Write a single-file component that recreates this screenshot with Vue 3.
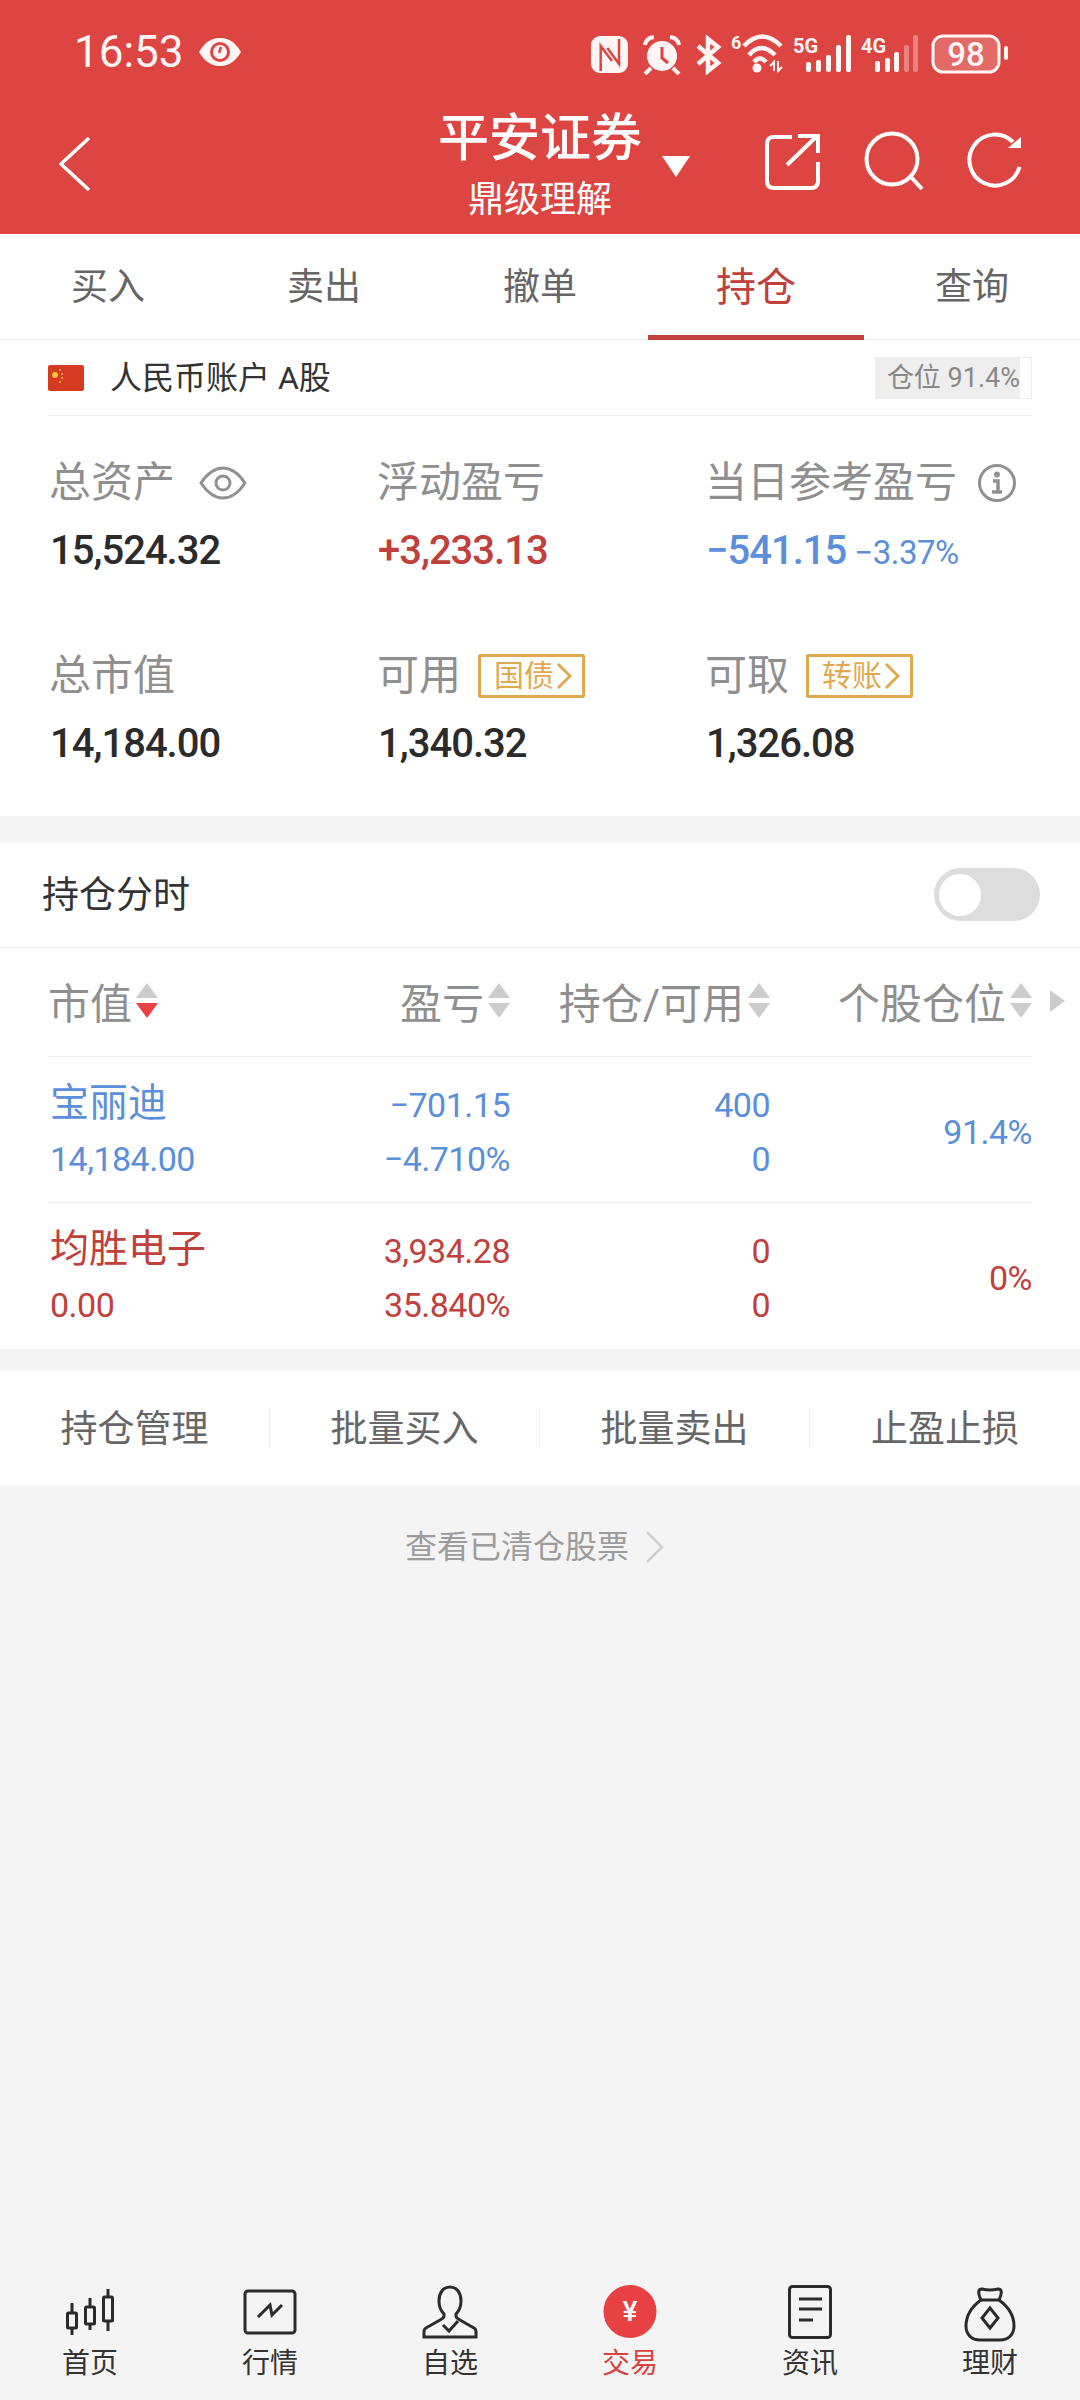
<script setup>
const tabs = ['买入', '卖出', '撤单', '持仓', '查询']
const actions = ['持仓管理', '批量买入', '批量卖出', '止盈止损']
const rows = [
  { name: '宝丽迪', value: '14,184.00', pl: '−701.15', pct: '−4.710%', hold: '400', avail: '0', pos: '91.4%', cls: 'blue' },
  { name: '均胜电子', value: '0.00', pl: '3,934.28', pct: '35.840%', hold: '0', avail: '0', pos: '0%', cls: 'red' }
]
const navs = ['首页', '行情', '自选', '交易', '资讯', '理财']
</script>

<template>
  <div class="app">
    <header class="head">
      <div class="status">
        <div class="status-left">
          <span class="time">16:53</span>
          <svg class="status-eye" width="46" height="32" viewBox="0 0 46 32">
            <path d="M2 16 C9 4 17 2 23 2 C29 2 37 4 44 16 C37 28 29 30 23 30 C17 30 9 28 2 16Z" fill="#fff5f5"/>
            <circle cx="23" cy="16" r="10" fill="#dc4541"/>
            <circle cx="23" cy="16" r="7" fill="#fff5f5"/>
            <path d="M24 11 L22 17" stroke="#dc4541" stroke-width="2.5"/>
          </svg>
        </div>
        <svg class="status-icons" width="420" height="42" viewBox="0 0 420 42">
          <rect x="2" y="3" width="37" height="37" rx="9" fill="#fff5f5"/>
          <path d="M11.7 38 V13 L23 28 M30 6 V31 L18.3 15" fill="none" stroke="#dc4541" stroke-width="2.5"/>
          <circle cx="73" cy="23" r="15" fill="#fff5f5"/>
          <path d="M73 14 V25 L79 30" fill="none" stroke="#dc4541" stroke-width="3"/>
          <path d="M56 12 Q57 5 65 4 M90 12 Q89 5 81 4 M62 35 L56 41 M84 35 L90 41" fill="none" stroke="#fff5f5" stroke-width="4"/>
          <path d="M109 13 L129 30 L119 38 V6 L129 14 L109 31" fill="none" stroke="#fff5f5" stroke-width="4.5"/>
          <text x="142" y="16" class="svg-t small">6</text>
          <path d="M155 13 Q173 -6 192 13 M160 22 Q172 8 186 22 M165 29 Q171 22 177 29" fill="none" stroke="#fff5f5" stroke-width="4.5"/>
          <circle cx="168" cy="35" r="4.5" fill="#fff5f5"/>
          <path d="M185 38 V29 L181 33 M189 28 V38 L193 34" fill="none" stroke="#fff5f5" stroke-width="2"/>
          <text x="204" y="20" class="svg-t mid">5G</text>
          <rect x="217" y="29" width="5" height="10" rx="2" fill="#fff5f5"/>
          <rect x="227" y="27" width="5" height="12" rx="2" fill="#fff5f5"/>
          <rect x="237" y="22" width="5" height="17" rx="2" fill="#fff5f5"/>
          <rect x="247" y="12" width="5" height="27" rx="2" fill="#fff5f5"/>
          <rect x="257" y="2" width="5" height="37" rx="2" fill="#fff5f5"/>
          <text x="272" y="20" class="svg-t mid">4G</text>
          <rect x="286" y="28" width="5" height="11" rx="2" fill="#fff5f5"/>
          <rect x="296" y="25" width="5" height="14" rx="2" fill="#fff5f5"/>
          <rect x="305" y="19" width="5" height="20" rx="2" fill="#fff5f5"/>
          <rect x="315" y="12" width="5" height="27" rx="2" fill="#fff5f5" opacity=".35"/>
          <rect x="324" y="2" width="5" height="37" rx="2" fill="#fff5f5" opacity=".35"/>
          <rect x="344" y="3" width="66" height="36" rx="10" fill="rgba(255,255,255,.2)" stroke="#fff5f5" stroke-width="3"/>
          <text x="377" y="33" text-anchor="middle" class="svg-t batt">98</text>
          <rect x="415" y="13" width="4" height="14" rx="2" fill="#fff5f5"/>
        </svg>
      </div>
      <div class="bar">
        <div class="bar-left">
          <svg width="32" height="54" viewBox="0 0 32 54">
            <path d="M30 1 L2 27 L30 53" fill="none" stroke="#fff" stroke-width="3.5" stroke-linejoin="miter"/>
          </svg>
        </div>
        <div class="title">
          <div class="title-main">平安证券</div>
          <div class="title-sub">鼎级理解</div>
        </div>
        <div class="bar-right">
          <span class="caret"></span>
          <div class="bar-icons">
            <svg class="share" width="56" height="58" viewBox="0 0 56 58">
              <path d="M27 3 H9 Q2 3 2 10 V47 Q2 54 9 54 H46 Q53 54 53 47 V28" fill="none" stroke="#fff" stroke-width="4"/>
              <path d="M22 31 L52 2 M33 2 H53 V19" fill="none" stroke="#fff" stroke-width="4"/>
            </svg>
            <svg width="60" height="62" viewBox="0 0 60 62">
              <circle cx="28" cy="29" r="25.5" fill="none" stroke="#fff" stroke-width="4"/>
              <path d="M47 47 L58 59" stroke="#fff" stroke-width="4"/>
            </svg>
            <svg width="58" height="62" viewBox="0 0 58 62">
              <path d="M46 12 A25.5 25.5 0 1 0 52.5 37" fill="none" stroke="#fff" stroke-width="4"/>
              <path d="M41 18 H54 V7 Z" fill="#fff" stroke="none"/>
            </svg>
          </div>
        </div>
      </div>
    </header>

    <nav class="tabs">
      <div v-for="(t, i) in tabs" :key="t" class="tab" :class="{ active: i === 3 }">{{ t }}</div>
    </nav>

    <section class="summary">
      <div class="account">
        <div class="account-left">
          <svg class="flag" width="36" height="26" viewBox="0 0 36 26">
            <rect width="36" height="26" rx="2" fill="#d63a22"/>
            <circle cx="7" cy="10" r="3" fill="#f3c531"/>
            <circle cx="12" cy="5" r="1" fill="#f3c531"/>
            <circle cx="14" cy="9" r="1" fill="#f3c531"/>
            <circle cx="14" cy="13" r="1" fill="#f3c531"/>
            <circle cx="12" cy="17" r="1" fill="#f3c531"/>
          </svg>
          <span class="account-name">人民币账户 A股</span>
        </div>
        <div class="chip"><span class="chip-fill">仓位 91.4%</span></div>
      </div>
      <div class="stats">
        <div class="stat">
          <div class="label">总资产
            <svg class="l-ico" width="48" height="36" viewBox="0 0 48 36">
              <path d="M2 18 C10 6 18 3 24 3 C30 3 38 6 46 18 C38 30 30 33 24 33 C18 33 10 30 2 18Z" fill="none" stroke="#919191" stroke-width="3"/>
              <circle cx="24" cy="18" r="7" fill="none" stroke="#919191" stroke-width="3"/>
            </svg>
          </div>
          <div class="val">15,524.32</div>
        </div>
        <div class="stat">
          <div class="label">浮动盈亏</div>
          <div class="val red">+3,233.13</div>
        </div>
        <div class="stat">
          <div class="label">当日参考盈亏
            <svg class="l-ico info" width="38" height="38" viewBox="0 0 38 38">
              <circle cx="19" cy="19" r="17.5" fill="none" stroke="#919191" stroke-width="3"/>
              <circle cx="19" cy="10.5" r="3" fill="#919191"/>
              <path d="M15 17 H20 V28 M14 28 H24" fill="none" stroke="#919191" stroke-width="3.5"/>
            </svg>
          </div>
          <div class="val blue">−541.15<small>−3.37%</small></div>
        </div>
        <div class="stat">
          <div class="label">总市值</div>
          <div class="val">14,184.00</div>
        </div>
        <div class="stat">
          <div class="label">可用
            <span class="tag">国债<svg width="16" height="30" viewBox="0 0 16 30"><path d="M2 3 L14 15 L2 27" fill="none" stroke="#e0a94f" stroke-width="3"/></svg></span>
          </div>
          <div class="val">1,340.32</div>
        </div>
        <div class="stat">
          <div class="label">可取
            <span class="tag">转账<svg width="16" height="30" viewBox="0 0 16 30"><path d="M2 3 L14 15 L2 27" fill="none" stroke="#e0a94f" stroke-width="3"/></svg></span>
          </div>
          <div class="val">1,326.08</div>
        </div>
      </div>
    </section>

    <section class="hold-time">
      <span class="hold-label">持仓分时</span>
      <div class="switch"><div class="knob"></div></div>
    </section>

    <section class="table">
      <div class="thead">
        <div class="th c1">市值<span class="sort"><i class="up"></i><i class="down on"></i></span></div>
        <div class="th c2">盈亏<span class="sort"><i class="up"></i><i class="down"></i></span></div>
        <div class="th c3">持仓/可用<span class="sort"><i class="up"></i><i class="down"></i></span></div>
        <div class="th c4">个股仓位<span class="sort"><i class="up"></i><i class="down"></i></span></div>
        <span class="more"></span>
      </div>
      <div v-for="r in rows" :key="r.name" class="trow" :class="r.cls">
        <div class="c1"><div class="name">{{ r.name }}</div><div class="num">{{ r.value }}</div></div>
        <div class="c2"><div class="num">{{ r.pl }}</div><div class="num">{{ r.pct }}</div></div>
        <div class="c3"><div class="num">{{ r.hold }}</div><div class="num">{{ r.avail }}</div></div>
        <div class="c4 num">{{ r.pos }}</div>
      </div>
    </section>

    <section class="actions">
      <div v-for="a in actions" :key="a" class="action">{{ a }}</div>
    </section>

    <div class="cleared">
      <span>查看已清仓股票</span>
      <svg width="20" height="32" viewBox="0 0 20 32"><path d="M2 1 L17 16 L2 31" fill="none" stroke="#cfcfcf" stroke-width="2.5"/></svg>
    </div>

    <div class="spacer"></div>

    <footer class="nav">
      <div v-for="(n, i) in navs" :key="n" class="nav-item" :class="{ on: i === 3 }">
        <svg width="60" height="60" viewBox="0 0 60 60" fill="none" stroke="#2b2b2b" stroke-width="3">
          <g v-if="i === 0">
            <path d="M12 20 V30 M12 45 V52 M30 15 V24 M30 41 V47 M48 6 V14 M48 38 V48"/>
            <rect x="7.5" y="30" width="9" height="15" rx="1"/>
            <rect x="25.5" y="24" width="9" height="17" rx="1"/>
            <rect x="43.5" y="14" width="9" height="24" rx="1"/>
          </g>
          <g v-else-if="i === 1">
            <rect x="5" y="8" width="50" height="42" rx="3"/>
            <path d="M18 34 L30 22 L32 32 L42 22"/>
          </g>
          <g v-else-if="i === 2">
            <path d="M30 4 C23 4 19 10 19 18 C19 25 21 28 24 31 V33 Q24 35 20 37 L6 45 Q4 46 4 49 V54 H56 V49 Q56 46 54 45 L40 37 Q36 35 36 33 V31 C39 28 41 25 41 18 C41 10 37 4 30 4Z"/>
            <path d="M23 42 L29 48 L38 38"/>
          </g>
          <g v-else-if="i === 3">
            <circle cx="30" cy="28.5" r="26.5" fill="#e84144" stroke="none"/>
            <text x="30" y="38" text-anchor="middle" class="svg-yen">¥</text>
          </g>
          <g v-else-if="i === 4">
            <rect x="9.5" y="3.5" width="41" height="51" rx="3"/>
            <path d="M19 16 H42 M19 26 H42 M19 37 H33"/>
          </g>
          <g v-else>
            <path d="M21 17 Q16 6 22 6 Q30 8 38 6 Q44 6 39 17 Z"/>
            <path d="M21 17 C10 25 6 35 6 43 C6 52 12 57 20 57 H40 C48 57 54 52 54 43 C54 35 50 25 39 17"/>
            <path d="M30 25 L38 35 L30 45 L22 35 Z"/>
          </g>
        </svg>
        <span>{{ n }}</span>
      </div>
    </footer>
  </div>
</template>

<style scoped>
.app {
  width: 1080px;
  height: 2400px;
  display: flex;
  flex-direction: column;
  background: #f4f4f4;
  font-family: Roboto, "Noto Sans CJK SC", sans-serif;
  overflow: hidden;
}
.head { height: 234px; background: #dc4541; color: #fff; flex: none; }
.status { height: 104px; display: flex; justify-content: space-between; align-items: center; padding: 0 71px 0 74px; }
.status-left { display: flex; align-items: center; gap: 13px; }
.time { font-size: 44px; line-height: 50px; color: #fff5f5; }
.status-icons { margin-top: 3px; }
.svg-t { fill: #fff5f5; font-family: Roboto, sans-serif; }
.small { font-size: 18px; font-weight: 700; }
.mid { font-size: 20px; font-weight: 700; }
.batt { font-size: 33px; font-weight: 500; }
.bar { display: grid; grid-template-columns: 1fr auto 1fr; height: 130px; }
.bar-left { padding: 33px 0 0 59px; }
.title { width: 210px; text-align: center; padding-top: 5px; white-space: nowrap; }
.title-main { font-size: 51px; line-height: 60px; font-weight: 500; }
.title-sub { font-size: 36px; line-height: 44px; margin-top: 9px; }
.bar-right { display: flex; align-items: flex-start; padding: 26px 55px 0 0; }
.caret { width: 0; height: 0; border-left: 14px solid transparent; border-right: 14px solid transparent; border-top: 21px solid #fff; margin: 26px 0 0 17px; }
.bar-icons { margin-left: auto; display: flex; gap: 43px; }
.share { margin-top: 4px; }

.tabs { display: flex; height: 106px; background: #fff; border-bottom: 1px solid #eee; flex: none; box-sizing: border-box; }
.tab { flex: 1; display: flex; align-items: center; justify-content: center; font-size: 37px; color: #666; padding-bottom: 6px; box-sizing: border-box; height: 106px; }
.tab.active { font-size: 40px; color: #c0403c; border-bottom: 5px solid #c0403c; padding-bottom: 1px; }

.summary { background: #fff; height: 476px; padding: 0 48px; flex: none; box-sizing: border-box; }
.account { height: 75px; display: flex; align-items: center; justify-content: space-between; border-bottom: 1px solid #eee; }
.account-left { display: flex; align-items: center; gap: 26px; font-size: 32px; color: #333; }
.account-name { margin-top: -5px; }
.chip { width: 157px; height: 42px; box-sizing: border-box; border: 1px solid #eee; }
.chip-fill { display: block; width: 144px; height: 40px; background: #eee; color: #888; font-size: 27px; line-height: 40px; text-align: right; white-space: nowrap; }

.stats { display: grid; grid-template-columns: 328px 328px 328px; grid-auto-rows: 193px; padding: 40px 0 0 2px; }
.label { display: flex; align-items: center; font-size: 42px; line-height: 54px; height: 54px; color: #8f8f8f; white-space: nowrap; margin-left: -1px; }
.l-ico { margin-left: 24px; }
.l-ico.info { margin-left: 21px; }
.val { font-size: 40px; letter-spacing: -1px; font-weight: 500; line-height: 50px; margin-top: 16px; color: #2b2b2b; white-space: nowrap; }
.val small { font-size: 33px; letter-spacing: -0.5px; font-weight: 400; margin-left: 8px; }
.val.red { color: #c0403c; }
.val.blue { color: #5b8fdb; }
.tag { display: inline-flex; align-items: center; gap: 2px; width: 107px; height: 44px; box-sizing: border-box; border: 3px solid #e0a94f; border-radius: 2px; margin-left: 17px; padding-left: 13px; font-size: 30px; line-height: 38px; color: #e0a94f; }

.hold-time { margin-top: 26px; height: 106px; flex: none; box-sizing: border-box; background: #fff; border-bottom: 1px solid #eee; display: flex; align-items: center; justify-content: space-between; padding: 0 40px 0 42px; font-size: 37px; color: #333; }
.hold-label { margin-top: -6px; }
.switch { width: 106px; height: 53px; border-radius: 27px; background: #ddd; display: flex; align-items: center; padding-left: 5px; box-sizing: border-box; }
.knob { width: 42px; height: 42px; border-radius: 50%; background: #fff; }

.table { background: #fff; padding: 0 48px; flex: none; position: relative; }
.thead { height: 109px; display: grid; grid-template-columns: 300px 162px 260px 262px; align-items: center; border-bottom: 1px solid #eee; box-sizing: border-box; }
.th { display: flex; align-items: center; justify-content: flex-end; font-size: 42px; color: #8f8f8f; white-space: nowrap; padding-bottom: 3px; }
.th.c1 { justify-content: flex-start; }
.sort { display: flex; flex-direction: column; gap: 5px; margin-left: 4px; }
.sort i { display: block; width: 0; height: 0; border-left: 11px solid transparent; border-right: 11px solid transparent; }
.sort .up { border-bottom: 15px solid #ccc; }
.sort .down { border-top: 15px solid #ccc; }
.sort .down.on { border-top-color: #e84144; }
.more { position: absolute; right: 15px; top: 42px; width: 0; height: 0; border-top: 11px solid transparent; border-bottom: 11px solid transparent; border-left: 15px solid #ccc; }
.trow { display: grid; grid-template-columns: 300px 162px 260px 262px; height: 146px; align-items: center; border-bottom: 1px solid #eee; box-sizing: border-box; padding-top: 4px; }
.trow:last-child { border-bottom: 0; }
.trow.blue { color: #5b8fdb; }
.trow.red { color: #c0403c; }
.trow .c1 { padding-left: 2px; }
.trow .c2, .trow .c3, .trow .c4 { text-align: right; }
.name { font-size: 39px; line-height: 54px; margin-top: -2px; margin-bottom: 2px; }
.num { font-size: 34px; letter-spacing: -0.5px; line-height: 54px; }

.actions { margin-top: 21px; height: 116px; flex: none; background: #fff; display: grid; grid-template-columns: repeat(4, 270px); align-items: center; }
.action { height: 42px; display: flex; align-items: center; justify-content: center; font-size: 37px; color: #666; border-right: 1px solid #f0f0f0; padding-bottom: 5px; box-sizing: border-box; }
.action:last-child { border-right: 0; }

.cleared { margin-top: 40px; display: flex; align-items: center; justify-content: center; gap: 16px; padding-right: 10px; font-size: 32px; line-height: 42px; color: #9c9c9c; flex: none; }

.spacer { flex: 1; }

.nav { height: 140px; flex: none; display: grid; grid-template-columns: repeat(6, 180px); }
.nav-item { display: flex; flex-direction: column; align-items: center; padding-top: 23px; font-size: 28px; line-height: 36px; color: #333; }
.nav-item span { margin-top: 3px; }
.nav-item.on { color: #d9413f; }
.svg-yen { fill: #fff; stroke: none; font-family: Roboto, sans-serif; font-size: 28px; font-weight: 500; }
</style>
